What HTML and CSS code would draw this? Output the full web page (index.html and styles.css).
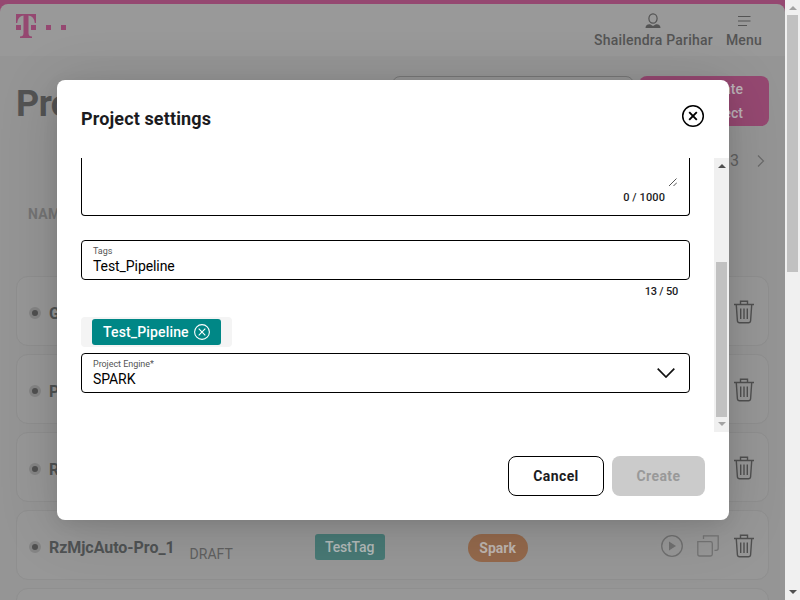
FILE: index.html
```html
<!DOCTYPE html>
<html lang="en">
<head>
<meta charset="utf-8">
<title>Projects</title>
<link rel="stylesheet" href="styles.css">
</head>
<body>
<svg class="defs" aria-hidden="true">
  <symbol id="trash" viewBox="0 0 20 24"><path d="M0 4.500h20M6.500 4V1.200h7V4M2.300 5l1.100 15.800q.2 2 2.200 2h8.800q2 0 2.200-2L17.700 5M6.700 8.500v10.500M10 8.500v10.500M13.300 8.500v10.500" fill="none" stroke="#505050" stroke-width="1.400"/></symbol>
</svg>
<div class="window">
  <div class="page">
    <div class="sheet">
      <header class="header">
        <svg class="logo" width="52" height="26" viewBox="0 0 52 26"><path fill="#954871" d="M0 0h20v9h-1.200Q18.200 2 12.500 1.400V19q0 3.500 3.500 3.500V24H4v-1.500q3.500 0 3.500-3.500V1.400Q1.800 2 1.200 9H0zM0 11h5v5H0zM15 11h5v5h-5zM30 11h5v5h-5zM45 11h5v5h-5z"/></svg>
        <nav class="nav">
          <a class="nav-item"><svg width="16" height="16" viewBox="0 0 16 16"><ellipse cx="8" cy="5.500" rx="4.100" ry="4.700" fill="none" stroke="#545454" stroke-width="1.200"/><path d="M.5 15q0-4 4.500-3.800L8 13l3-1.800q4.500-.2 4.500 3.800z" fill="#545454"/></svg><span class="user">Shailendra Parihar</span></a>
          <a class="nav-item"><svg width="14" height="16" viewBox="0 0 14 16"><path d="M1 3.500h12.500M1 8h12.500M1 12.500h9" stroke="#545454" stroke-width="1.200"/></svg><span class="menu">Menu</span></a>
        </nav>
      </header>
      <div class="title-row">
        <h1>Pro</h1>
        <div class="search"></div>
        <button class="create-project"><span>Create</span><span>Project</span></button>
      </div>
      <div class="pager"><span>3</span><svg width="8" height="12" viewBox="0 0 8 12"><path d="M1 .5L6.500 6 1 11.500" fill="none" stroke="#6a6a6a" stroke-width="1.200"/></svg></div>
      <div class="columns">NAME</div>
      <div class="rows">
        <div class="row"><i class="dot"></i><b class="name">G</b><svg class="trash" width="20" height="24"><use href="#trash"/></svg></div>
        <div class="row"><i class="dot"></i><b class="name">P</b><svg class="trash" width="20" height="24"><use href="#trash"/></svg></div>
        <div class="row"><i class="dot"></i><b class="name">R</b><svg class="trash" width="20" height="24"><use href="#trash"/></svg></div>
        <div class="row"><i class="dot"></i><b class="name">RzMjcAuto-Pro_1</b><span class="state">DRAFT</span>
          <span class="cell tag-cell"><span class="test-tag">TestTag</span></span>
          <span class="cell"><span class="engine">Spark</span></span>
          <svg class="play" width="22" height="22" viewBox="0 0 22 22"><circle cx="11" cy="11" r="10.300" fill="none" stroke="#707070" stroke-width="1.300"/><path d="M8 6.500l7 4.500-7 4.500z" fill="#707070"/></svg>
          <svg class="copy" width="22" height="22" viewBox="0 0 22 22"><path d="M.8 6.700h12.700q1.800 0 1.800 1.800v10.700q0 1.800-1.800 1.800H2.600Q.8 21 .8 19.200zM6.500 4V.8h14.700v12.500q0 2-2 2H17.500" fill="none" stroke="#747474" stroke-width="1.300"/></svg>
          <svg class="trash" width="20" height="24"><use href="#trash"/></svg></div>
        <div class="row"></div>
      </div>
    </div>
  </div>
  <div class="scrollbar page-scroll"><i class="up faint"></i><i class="thumb"></i><i class="down"></i></div>
</div>

<div class="modal" role="dialog">
  <div class="modal-head"><h2>Project settings</h2>
    <svg width="24" height="24" viewBox="0 0 24 24"><circle cx="12" cy="12" r="10.300" fill="none" stroke="#000" stroke-width="1.500"/><path d="M8.200 8.200l7.600 7.600M15.800 8.200l-7.600 7.600" stroke="#000" stroke-width="1.900"/></svg>
  </div>
  <div class="modal-body">
    <div class="form">
      <div class="area"><svg width="8" height="8" viewBox="0 0 8 8"><path d="M0 8l7.500-7.500M4.500 8L8 4.500" stroke="#555" stroke-width="1"/></svg><span class="count">0 / 1000</span></div>
      <div class="field"><label class="tags-label">Tags</label><span class="tags-value">Test_Pipeline</span></div>
      <div class="count below">13 / 50</div>
      <div class="chips"><span class="chip"><span>Test_Pipeline</span><svg width="16" height="16" viewBox="0 0 16 16"><path d="M4.700 4.700l6.600 6.600M11.300 4.700l-6.600 6.600" stroke="#fff" stroke-width="1.100"/><circle cx="8" cy="8" r="7.400" fill="none" stroke="#fff" stroke-width="1.100"/></svg></span></div>
      <div class="field select"><div class="select-text"><label class="engine-label">Project Engine*</label><span class="engine-value">SPARK</span></div><svg width="18" height="10" viewBox="0 0 18 10"><path d="M.7.700L9 9 17.300.7" fill="none" stroke="#111" stroke-width="1.700"/></svg></div>
    </div>
    <div class="scrollbar modal-scroll"><i class="up"></i><i class="thumb"></i><i class="down faint"></i></div>
  </div>
  <div class="modal-foot"><button class="cancel">Cancel</button><button class="create">Create</button></div>
</div>
</body>
</html>
```
FILE: styles.css
```css
* { box-sizing: border-box; }
body { margin: 0; width: 800px; height: 600px; overflow: hidden; font: 14px/20px Roboto, sans-serif; color: #1b1b1e; }
svg { display: block; flex: none; }
button { font: inherit; margin: 0; border: 0; }
.defs { position: absolute; width: 0; height: 0; }
.window { display: flex; height: 600px; }
.page { width: 785px; padding-top: 4px; background: #954871; overflow: hidden; }
.sheet { height: 640px; padding: 0 16px; background: linear-gradient(#999 52px, #959595 52px); border-radius: 8px 8px 0 0; }

.header { height: 72px; display: flex; justify-content: space-between; padding-top: 9px; }
.logo { margin-top: 1px; }
.nav { display: flex; gap: 13px; padding-right: 7px; color: #545454; font-weight: 500; }
.nav-item { display: flex; flex-direction: column; align-items: center; gap: 1px; white-space: nowrap; }
.user { letter-spacing: 0.21px; }
.menu { letter-spacing: 0.2px; }

.title-row { display: flex; height: 50px; }
h1 { margin: 3px 0 0; width: 376px; flex: none; font-size: 36px; line-height: 50px; color: #535353; letter-spacing: -0.5px; }
.search { width: 242px; height: 50px; border: 1px solid #777; border-radius: 8px; }
.create-project { width: 130px; margin-left: 5px; flex: none; display: flex; flex-direction: column; align-items: flex-end; padding: 1px 26px 0 0; background: #954871; border-radius: 8px; color: #bcb2b8; font-weight: 500; line-height: 24px; }
.pager { display: flex; justify-content: flex-end; align-items: center; gap: 18px; margin-top: 25px; height: 20px; padding-right: 4px; font-size: 16px; color: #606060; }
.columns { margin-top: 33px; height: 20px; padding-left: 12px; font-weight: 700; color: #747474; letter-spacing: .3px; }
.rows { display: flex; flex-direction: column; gap: 8px; margin-top: 52px; }
.row { width: 753px; height: 70px; flex: none; display: flex; align-items: center; padding: 2px 14px 0 12px; border: 1px solid #8f8f8f; border-radius: 12px; background: #979797; }
.dot { flex: none; width: 12px; height: 12px; margin-top: 2px; border: 3px solid #858585; border-radius: 50%; background: #505050; }
.name { margin: 3px 0 0 8px; font-size: 16px; color: #505354; white-space: nowrap; letter-spacing: -.05px; }
.state { margin: 16px 0 0 15px; width: 44px; color: #606060; }
.cell { display: block; flex: none; width: 60px; }
.tag-cell { width: 70px; margin: 2px 83px 0 81px; }
.test-tag, .engine { display: block; text-align: center; background: #487975; color: #b2bab9; font-weight: 500; width: 70px; height: 26px; line-height: 27px; border-radius: 3px; }
.test-tag { letter-spacing: -.15px; }
.engine { width: 60px; height: 28px; line-height: 29px; margin-top: 4px; border-radius: 14px; background: #94694c; color: #beb5af; font-weight: 700; }
.play { margin-left: auto; }
.copy { margin-left: 14px; }
.trash { margin-left: auto; }
.copy + .trash { margin-left: 15px; }

.scrollbar { width: 15px; background: #f0f0f0; display: flex; flex-direction: column; align-items: center; }
.thumb { width: 11px; background: #c1c1c1; }
.up, .down { width: 0; height: 0; border: 4px solid transparent; }
.up { border-top: 0; border-bottom-color: #505050; }
.down { border-bottom: 0; border-top-color: #505050; }
.up.faint { border-bottom-color: #a3a3a3; }
.down.faint { border-top-color: #a3a3a3; }
.page-scroll .up { margin-top: 6px; }
.page-scroll .thumb { height: 257px; margin-top: 5px; }
.page-scroll .down { margin-top: auto; margin-bottom: 6px; }

.modal { position: absolute; left: 57px; top: 80px; width: 672px; height: 440px; background: #fff; border-radius: 8px; box-shadow: 0 8px 60px rgba(0,0,0,.16), 0 4px 16px rgba(0,0,0,.08); clip-path: inset(-80px -56px -80px -57px); }
.modal-head { display: flex; justify-content: space-between; height: 78px; padding: 24px 24px 0; }
h2 { margin: 3px 0 0; font-size: 18px; line-height: 24px; letter-spacing: 0.13px; }
.modal-body { display: flex; justify-content: space-between; height: 274px; padding-left: 24px; }
.form { width: 609px; }
.area { height: 58px; border: 1px solid #000; border-top: 0; border-radius: 0 0 4px 4px; padding: 20px 12px 0 0; display: flex; flex-direction: column; align-items: flex-end; }
.count { font-size: 11px; line-height: 16px; font-weight: 500; }
.area .count { margin: 4px 12px 0 0; letter-spacing: .1px; }
.field { display: flex; flex-direction: column; height: 40px; margin-top: 24px; padding: 5px 11px 0; border: 1px solid #000; border-radius: 4px; }
label { display: block; font-size: 9px; line-height: 11px; color: #555; letter-spacing: -.05px; }
.tags-value, .engine-value { display: block; line-height: 18px; color: #000; letter-spacing: -.08px; }
.below { text-align: right; padding-right: 12px; margin-top: 4px; letter-spacing: -.2px; }
.chips { width: 151px; height: 30px; margin-top: 17px; padding: 2px 11px; background: #f4f4f4; border-radius: 4px; }
.chip { display: flex; align-items: center; justify-content: space-between; width: 129px; height: 26px; padding: 0 11px; background: #008786; border-radius: 3px; color: #fff; font-weight: 500; letter-spacing: .15px; }
.select { flex-direction: row; justify-content: space-between; margin-top: 6px; padding-right: 14px; }
.select svg { margin-top: 9px; }
.modal-scroll .up { margin-top: 6px; }
.modal-scroll .thumb { height: 155px; margin-top: 94px; }
.modal-scroll .down { margin-top: 5px; }
.modal-foot { display: flex; justify-content: flex-end; gap: 8px; padding: 24px 24px 0; }
.cancel, .create { width: 96px; height: 40px; border: 1px solid #000; border-radius: 8px; background: #fff; font-weight: 700; color: #1b1b1e; letter-spacing: .4px; }
.create { width: 93px; border: 0; background: #cbcbcb; color: #999; letter-spacing: .4px; }
```
